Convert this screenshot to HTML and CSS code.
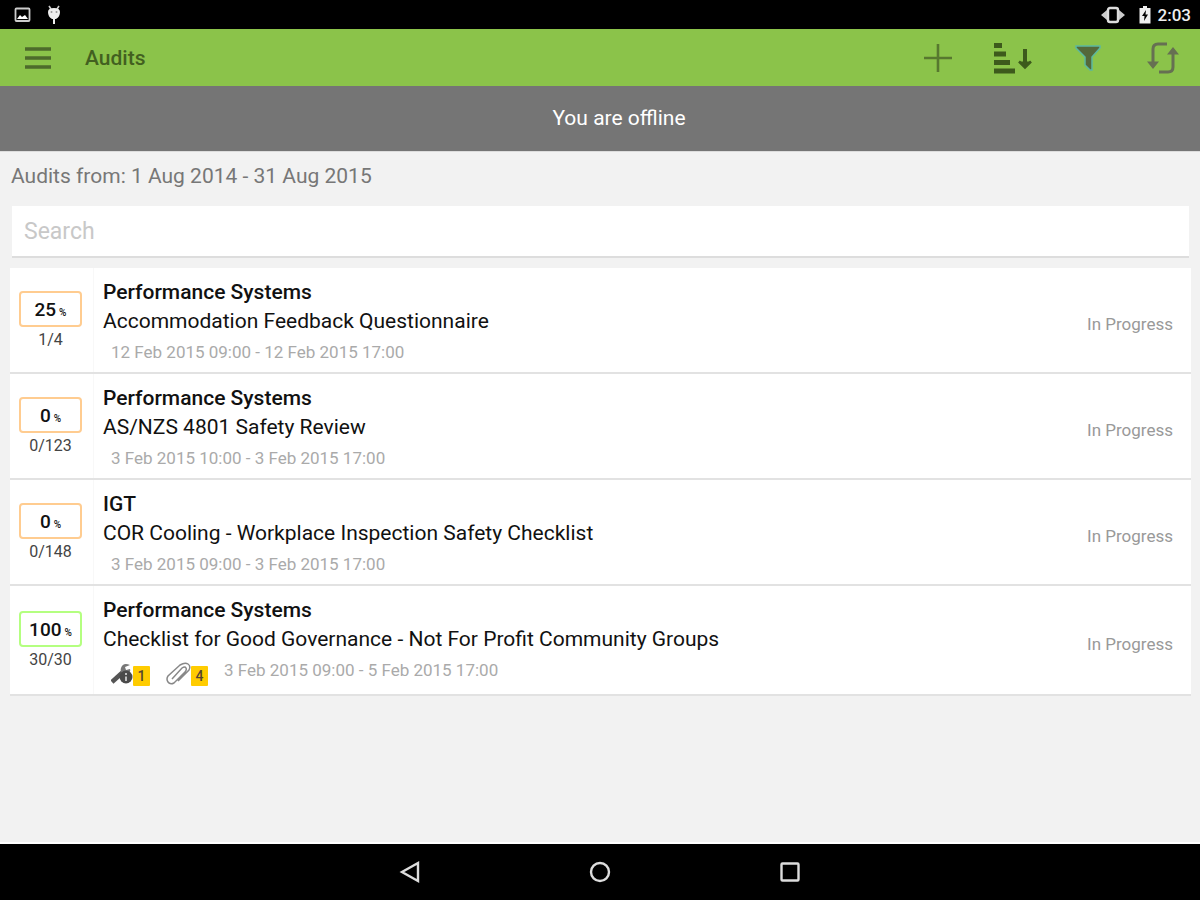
FILE: index.html
```html
<!DOCTYPE html>
<html lang="en">
<head>
  <meta charset="UTF-8">
  <meta name="viewport" content="width=device-width, initial-scale=1.0">
  <title>Audits</title>
  <link rel="stylesheet" href="styles.css">
</head>
<body>
  <div class="statusbar">
    <svg width="18" height="16" viewBox="0 0 18 16"><rect x="1.5" y="1.5" width="14" height="12.5" rx="1" fill="none" stroke="#ccc" stroke-width="1.8"/><path d="M3 12l3-4 2 2 3-2 3 4z" fill="#fff"/></svg>
    <svg width="16" height="20" viewBox="0 0 16 20"><path d="M3 1l2 3M13 1l-2 3" stroke="#ccc" stroke-width="1.6"/><path d="M2 7q0-4 6-4t6 4q0 5-4 7H9v5H7v-5H6Q2 12 2 7z" fill="#eee"/><circle cx="5.5" cy="7" r="1" fill="#999"/><circle cx="10.5" cy="7" r="1" fill="#999"/></svg>
    <span class="spacer"></span>
    <svg width="24" height="18" viewBox="0 0 24 18"><rect x="7" y="2" width="10" height="14" rx="2" fill="none" stroke="#ddd" stroke-width="2.4"/><path d="M6 4v10L0 9zM18 4v10l6-5z" fill="#ccc"/></svg>
    <svg class="battery" width="12" height="18" viewBox="0 0 12 18"><path d="M4 0h4v2h3.500v15.500H.5V2H4z" fill="#eee"/><path d="M7 4L3 10h2.500L5 15l4-6.500H6.500z" fill="#000"/></svg>
    <span class="clock">2:03</span>
  </div>

  <header class="toolbar">
    <button aria-label="Menu"><svg width="28" height="24" viewBox="0 0 28 24"><path d="M1 3h26M1 12h26M1 21h26" stroke="#4d6b2b" stroke-width="3.500"/></svg></button>
    <h1>Audits</h1>
    <div class="actions">
      <button aria-label="Add"><svg width="28" height="28" viewBox="0 0 28 28"><path d="M14 0v28M0 14h28" stroke="#57782f" stroke-width="2.600"/></svg></button>
      <button aria-label="Sort"><svg width="40" height="32" viewBox="0 0 40 32"><path d="M1 3.500h8M1 12h12M1 20.500h16M1 29h21" stroke="#3d5a1c" stroke-width="5"/><path d="M32 7v17" stroke="#3d5a1c" stroke-width="4"/><path d="M26 19.500l6 6 6-6" fill="#3d5a1c" stroke="#3d5a1c" stroke-width="2.500"/></svg></button>
      <button aria-label="Filter"><svg width="28" height="28" viewBox="0 0 28 28"><path d="M2 2h24v2l-8 9v13h-2l-5-5v-8L2 4z" fill="#54683a" stroke="#5cb8a0" stroke-width="1.500"/></svg></button>
      <button class="sync" aria-label="Sync"><svg width="32" height="32" viewBox="0 0 32 32"><path d="M20 2h-9q-5 0-5 5v15M12 30h9q5 0 5-5V10" fill="none" stroke="#667052" stroke-width="3"/><path d="M0 19.500h12L6 27zM20 12.500h12L26 5z" fill="#667052"/></svg></button>
    </div>
  </header>

  <div class="offline">You are offline</div>

  <main>
    <h2>Audits from: 1 Aug 2014 - 31 Aug 2015</h2>
    <div class="searchbar"><input class="search" type="text" placeholder="Search" aria-label="Search"></div>

    <ul class="audits">
      <li>
        <div class="progress">
          <div class="percent">25<small>%</small></div>
          <div class="count">1/4</div>
        </div>
        <div class="info">
          <h3>Performance Systems</h3>
          <p>Accommodation Feedback Questionnaire</p>
          <div class="meta"><span class="date">12 Feb 2015 09:00 - 12 Feb 2015 17:00</span></div>
        </div>
        <span class="status">In Progress</span>
      </li>
      <li>
        <div class="progress">
          <div class="percent">0<small>%</small></div>
          <div class="count">0/123</div>
        </div>
        <div class="info">
          <h3>Performance Systems</h3>
          <p>AS/NZS 4801 Safety Review</p>
          <div class="meta"><span class="date">3 Feb 2015 10:00 - 3 Feb 2015 17:00</span></div>
        </div>
        <span class="status">In Progress</span>
      </li>
      <li>
        <div class="progress">
          <div class="percent">0<small>%</small></div>
          <div class="count">0/148</div>
        </div>
        <div class="info">
          <h3>IGT</h3>
          <p>COR Cooling - Workplace Inspection Safety Checklist</p>
          <div class="meta"><span class="date">3 Feb 2015 09:00 - 3 Feb 2015 17:00</span></div>
        </div>
        <span class="status">In Progress</span>
      </li>
      <li>
        <div class="progress">
          <div class="percent done">100<small>%</small></div>
          <div class="count">30/30</div>
        </div>
        <div class="info">
          <h3>Performance Systems</h3>
          <p>Checklist for Good Governance - Not For Profit Community Groups</p>
          <div class="meta">
            <span class="tag"><svg width="22" height="22" viewBox="0 0 22 22"><path d="M1 19L12 9" stroke="#555" stroke-width="4.500"/><path d="M19 2q-7-3-9 3-1 3 1 5l6 2q3-3 2-6l-4 1-1-3z" fill="#777"/><circle cx="15" cy="14" r="6.500" fill="#4a4a4a"/><path d="M15 10v2M15 13.500v4.500" stroke="#ddd" stroke-width="1.600"/></svg><b>1</b></span>
            <span class="tag"><svg width="25" height="24" viewBox="0 0 25 24"><path d="M6 17L16 6q3-2 4 0t-1 4L8 21q-4 2-6-1t0-6L14 3q5-3 8-1t1 6L12 19" fill="none" stroke="#888" stroke-width="1.500"/></svg><b>4</b></span>
            <span class="date">3 Feb 2015 09:00 - 5 Feb 2015 17:00</span>
          </div>
        </div>
        <span class="status">In Progress</span>
      </li>
    </ul>
  </main>

  <nav class="navbar">
    <button aria-label="Back"><svg width="22" height="24" viewBox="0 0 22 24"><path d="M19 3v18L3 12z" fill="none" stroke="#ddd" stroke-width="2.400"/></svg></button>
    <button aria-label="Home"><svg width="22" height="24" viewBox="0 0 22 24"><circle cx="11" cy="12" r="9" fill="none" stroke="#ddd" stroke-width="2.400"/></svg></button>
    <button aria-label="Recent apps"><svg width="22" height="24" viewBox="0 0 22 24"><rect x="2.500" y="3.500" width="17" height="17" rx="1" fill="none" stroke="#ddd" stroke-width="2.400"/></svg></button>
  </nav>
</body>
</html>
```
FILE: styles.css
```css
* { box-sizing: border-box; }
body { margin: 0; min-height: 100vh; display: flex; flex-direction: column; background: #f2f2f2; color: #111; font-family: Roboto, sans-serif; }
h1, h2, h3, p, ul { margin: 0; padding: 0; font-weight: 400; }
button { display: flex; padding: 0; border: 0; background: none; }
svg { display: block; }

.statusbar { display: flex; align-items: center; height: 29px; padding: 0 9px 0 14px; background: #000; color: #eee; }
.statusbar svg + svg { margin-left: 14px; }
.statusbar .spacer { flex: 1; }
.statusbar .battery { margin-right: 7px; }
.clock { font-size: 17px; font-weight: 500; }

.toolbar { display: flex; align-items: center; height: 57px; padding: 0 21px 0 24px; background: #8bc34a; }
.toolbar h1 { margin-left: 33px; font-size: 21px; font-weight: 500; color: #426020; }
.actions { display: flex; align-items: center; gap: 41px; margin-left: auto; }
.sync { margin-left: 4px; }

.offline { height: 65px; padding-left: 38px; line-height: 65px; background: #757575; color: #fff; font-size: 21px; text-align: center; }

main { flex: 1; padding: 0 9px 0 10px; border-top: 1px solid #ddd; border-bottom: 2px solid #fff; }
h2 { padding-left: 1px; font-size: 21px; line-height: 48px; color: #777; }
.searchbar { padding: 6px 2px 10px; }
.search { display: block; width: 100%; height: 52px; padding: 0 12px; border: 0; border-bottom: 2px solid #ddd; background: #fff; font-family: inherit; font-size: 23px; }
.search::placeholder { color: #c8c8c8; }

.audits { list-style: none; }
.audits li { display: flex; align-items: center; background: #fff; border-bottom: 2px solid #e2e2e2; }
.progress { width: 83px; padding-left: 9px; text-align: center; }
.percent { width: 63px; height: 36px; line-height: 34px; border: 2px solid #ffcc90; border-radius: 4px; font-size: 19px; font-weight: 500; }
.percent.done { border-color: #b4ff80; }
.percent small { margin-left: 3px; font-size: 10px; }
.count { width: 63px; margin-top: 3px; font-size: 16px; line-height: 20px; color: #444; }
.info { flex: 1; padding: 10px 0 8px 9px; border-left: 1px solid #f8f8f8; }
.info h3 { font-size: 21px; font-weight: 500; line-height: 28px; }
.info p { font-size: 21px; line-height: 30px; }
.meta { display: flex; margin: 4px 0 0 8px; }
.date { font-size: 17px; line-height: 24px; color: #aaa; }
.tag { display: flex; align-items: center; margin-right: 16px; padding-top: 4px; }
.tag b { width: 17px; height: 20px; margin-top: 4px; background: #fc0; border-radius: 1px; color: #543; font-size: 14px; font-weight: 500; line-height: 20px; text-align: center; }
.status { padding: 8px 18px 0 0; font-size: 17px; color: #999; }

.navbar { display: flex; justify-content: center; align-items: center; gap: 168px; height: 56px; background: #000; }
```
